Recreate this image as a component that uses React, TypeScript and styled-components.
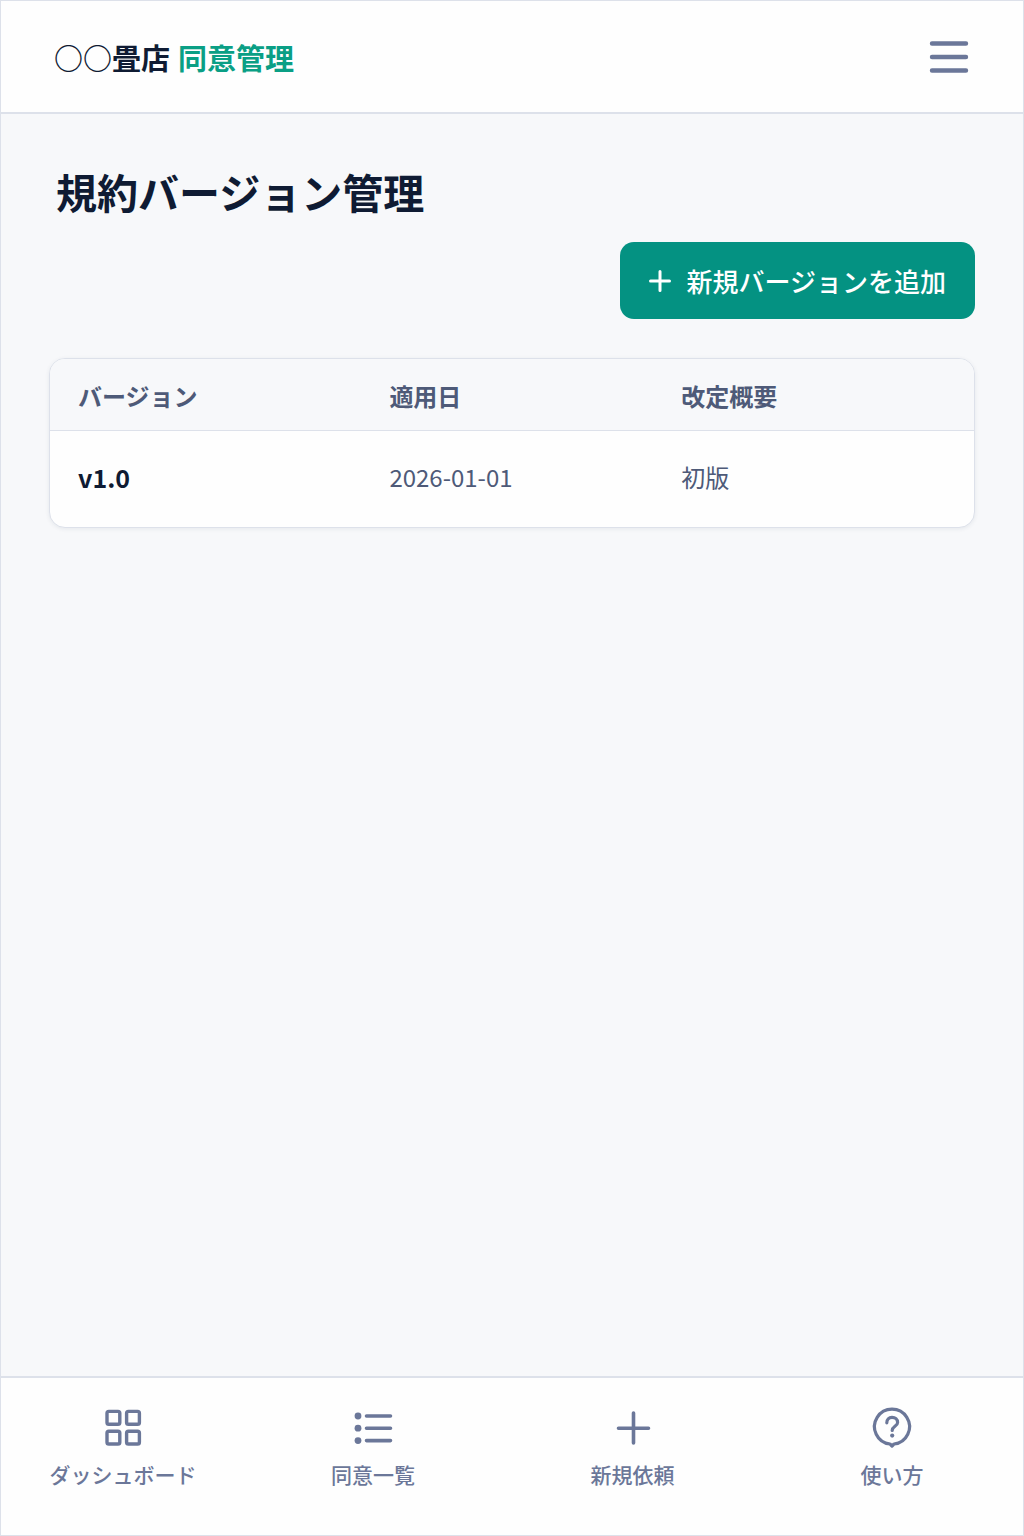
import React from "react";
import styled, { createGlobalStyle } from "styled-components";

const color = {
  page: "#f7f8fa",
  surface: "#fefefe",
  line: "#dde1ea",
  ink: "#0f1b33",
  body: "#4e5a78",
  muted: "#6b7799",
  brand: "#0a9f85",
  action: "#049282",
};

const GlobalStyle = createGlobalStyle`
  *, *::before, *::after { box-sizing: border-box; }
  body {
    margin: 0;
    background: ${color.page};
    color: ${color.ink};
    font-family: "Noto Sans CJK JP", "Noto Sans", sans-serif;
  }
`;

const Page = styled.div`
  min-height: 100vh;
  display: flex;
  flex-direction: column;
  border: 1px solid ${color.line};
`;

const Header = styled.header`
  display: flex;
  align-items: center;
  justify-content: space-between;
  height: 113px;
  padding: 0 46px 0 53px;
  background: ${color.surface};
  border-bottom: 2px solid ${color.line};
`;

const Brand = styled.a`
  display: flex;
  gap: 8px;
  color: ${color.ink};
  font-size: 29px;
  font-weight: 700;
  line-height: 40px;
  text-decoration: none;
`;

const BrandAccent = styled.span`
  color: ${color.brand};
`;

const MenuButton = styled.button`
  display: flex;
  padding: 0;
  border: 0;
  background: none;
  color: ${color.muted};
  cursor: pointer;
`;

const Main = styled.main`
  flex: 1;
  display: flex;
  flex-direction: column;
  padding: 48px;
`;

const Title = styled.h1`
  margin: 0;
  padding: 0 7px;
  font-size: 41px;
  font-weight: 700;
  line-height: 58px;
`;

const AddButton = styled.button`
  align-self: flex-end;
  display: flex;
  align-items: center;
  gap: 16px;
  height: 77px;
  margin: 22px 0 39px;
  padding: 0 29px;
  border: 0;
  border-radius: 14px;
  background: ${color.action};
  color: #fff;
  font-family: inherit;
  font-size: 26px;
  font-weight: 500;
  line-height: 40px;
  cursor: pointer;
`;

const Card = styled.div`
  overflow: hidden;
  border: 1px solid ${color.line};
  border-radius: 16px;
  background: ${color.surface};
  box-shadow: 0 1px 4px rgba(30, 45, 80, 0.08);
`;

const Table = styled.table`
  width: 100%;
  table-layout: fixed;
  border-collapse: separate;
  border-spacing: 0;
  font-size: 24px;
  line-height: 36px;
  text-align: left;
`;

const HeadCell = styled.th<{ $width?: string }>`
  width: ${({ $width }) => $width ?? "auto"};
  height: 72px;
  padding: 2px 0 0 28px;
  background: ${color.page};
  border-bottom: 1px solid ${color.line};
  color: ${color.body};
  font-weight: 700;
`;

const Cell = styled.td`
  height: 96px;
  padding: 0 0 4px 28px;
  color: ${color.body};
`;

const VersionCell = styled.th`
  height: 96px;
  padding: 0 0 4px 28px;
  font-size: 25px;
  font-weight: 700;
`;

const Nav = styled.nav`
  display: grid;
  grid-template-columns: 244fr 256fr 263fr 256fr;
  height: 159px;
  padding: 28px 3px 0 0;
  background: ${color.surface};
  border-top: 2px solid ${color.line};
`;

const NavLink = styled.a`
  display: flex;
  flex-direction: column;
  align-items: center;
  gap: 8px;
  color: ${color.muted};
  font-size: 21px;
  font-weight: 500;
  line-height: 32px;
  text-decoration: none;
`;

const Stroke = styled.svg`
  fill: none;
  stroke: currentColor;
  stroke-linecap: round;
  stroke-linejoin: round;
`;

const Dot = styled.circle`
  fill: currentColor;
  stroke: none;
`;

const MenuIcon = () => (
  <Stroke width="56" height="44" viewBox="0 0 56 44" strokeWidth="4.4" aria-hidden="true">
    <path d="M11 8.5H45M11 22H45M11 35.5H45" />
  </Stroke>
);

const PlusIcon = () => (
  <Stroke width="22" height="22" viewBox="0 0 22 22" strokeWidth="3" aria-hidden="true">
    <path d="M11 1.5V20.5M1.5 11H20.5" />
  </Stroke>
);

const GridIcon = () => (
  <Stroke width="44" height="44" viewBox="0 0 44 44" strokeWidth="3.4" aria-hidden="true">
    <rect x="6" y="5.4" width="12.8" height="12.8" rx="1.8" />
    <rect x="25.6" y="5.4" width="12.8" height="12.8" rx="1.8" />
    <rect x="6" y="25.2" width="12.8" height="12.8" rx="1.8" />
    <rect x="25.6" y="25.2" width="12.8" height="12.8" rx="1.8" />
  </Stroke>
);

const ListIcon = () => (
  <Stroke width="44" height="44" viewBox="0 0 44 44" strokeWidth="3.6" aria-hidden="true">
    <path d="M15.5 10H39.5M15.5 22.2H39.5M15.5 34.6H39.5" />
    <Dot cx="7" cy="10" r="3.4" />
    <Dot cx="7" cy="22.2" r="3.4" />
    <Dot cx="7" cy="34.6" r="3.4" />
  </Stroke>
);

const NewIcon = () => (
  <Stroke width="44" height="44" viewBox="0 0 44 44" strokeWidth="3.6" aria-hidden="true">
    <path d="M22.5 7V37M7.5 22.2H37.5" />
  </Stroke>
);

const HelpIcon = () => (
  <Stroke width="44" height="44" viewBox="0 0 44 44" strokeWidth="3.2" aria-hidden="true">
    <path d="M20 38A17.5 17.5 0 1 1 24 38L22 40Z" />
    <path d="M16.8 16.8C16.8 13.6 19 11.4 22 11.4C25.2 11.4 27.6 13.5 27.6 16.4C27.6 20.2 22.2 20.4 22.2 24.4" />
    <Dot cx="22.2" cy="29.6" r="2.1" />
  </Stroke>
);

const columns = [
  { label: "バージョン", width: "33.7%" },
  { label: "適用日", width: "31.6%" },
  { label: "改定概要" },
];

const versions = [{ version: "v1.0", date: "2026-01-01", summary: "初版" }];

const links = [
  { href: "#dashboard", label: "ダッシュボード", Icon: GridIcon },
  { href: "#consents", label: "同意一覧", Icon: ListIcon },
  { href: "#new", label: "新規依頼", Icon: NewIcon },
  { href: "#help", label: "使い方", Icon: HelpIcon },
];

export default function App() {
  return (
    <>
      <GlobalStyle />
      <Page>
        <Header>
          <Brand href="#top">
            <span>○○畳店</span>
            <BrandAccent>同意管理</BrandAccent>
          </Brand>
          <MenuButton type="button" aria-label="メニュー">
            <MenuIcon />
          </MenuButton>
        </Header>
        <Main>
          <Title>規約バージョン管理</Title>
          <AddButton type="button">
            <PlusIcon />
            新規バージョンを追加
          </AddButton>
          <Card>
            <Table>
              <thead>
                <tr>
                  {columns.map(({ label, width }) => (
                    <HeadCell key={label} scope="col" $width={width}>
                      {label}
                    </HeadCell>
                  ))}
                </tr>
              </thead>
              <tbody>
                {versions.map(({ version, date, summary }) => (
                  <tr key={version}>
                    <VersionCell scope="row">{version}</VersionCell>
                    <Cell>{date}</Cell>
                    <Cell>{summary}</Cell>
                  </tr>
                ))}
              </tbody>
            </Table>
          </Card>
        </Main>
        <Nav>
          {links.map(({ href, label, Icon }) => (
            <NavLink key={href} href={href}>
              <Icon />
              {label}
            </NavLink>
          ))}
        </Nav>
      </Page>
    </>
  );
}
